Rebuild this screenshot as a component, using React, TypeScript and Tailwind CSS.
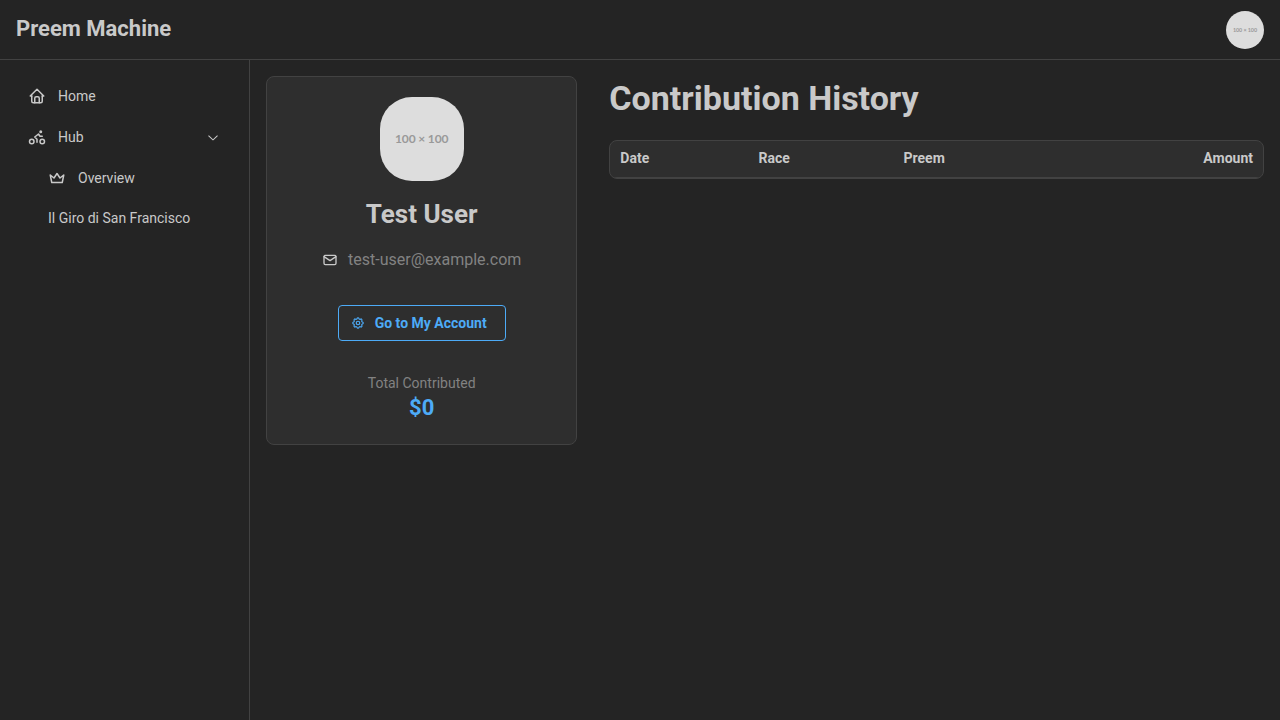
import { TbHome, TbBike, TbCrown, TbMail, TbSettings } from 'react-icons/tb';
import { RxChevronDown } from 'react-icons/rx';

export default function App() {
  return (
    <div className="flex h-screen flex-col bg-[#242424] font-['Roboto',sans-serif] text-[#c9c9c9]">
      <header className="flex h-[60px] shrink-0 items-center justify-between border-b border-[#424242] px-4">
        <div className="pb-px text-[22px] leading-[30px] font-bold">Preem Machine</div>
        <div className="flex size-[38px] items-center justify-center rounded-full bg-[#dddddd] pt-px font-['Lato',sans-serif] text-[5.4px] font-bold tracking-[-0.05px] text-[#999999]">
          100 × 100
        </div>
      </header>
      <div className="flex min-h-0 flex-1">
        <nav className="w-[250px] shrink-0 border-r border-[#424242] px-4 pt-[15px] text-sm">
          <a className="flex h-[41px] items-center gap-3 px-3">
            <TbHome size={18} />
            Home
          </a>
          <a className="flex h-[41px] items-center gap-3 px-3">
            <TbBike size={18} />
            Hub
            <RxChevronDown size={16} className="ml-auto" />
          </a>
          <a className="flex h-[41px] items-center gap-3 px-8">
            <TbCrown size={18} />
            Overview
          </a>
          <a className="flex h-[39px] items-center px-8">Il Giro di San Francisco</a>
        </nav>
        <main className="flex flex-1 items-start gap-8 p-4">
          <section className="flex h-[369px] w-[311.33px] shrink-0 flex-col items-center rounded-lg border border-[#424242] bg-[#2e2e2e] pt-5">
            <div className="flex size-[84px] items-center justify-center rounded-[32px] bg-[#dddddd] font-['Lato',sans-serif] text-[12px] font-bold tracking-[-0.15px] text-[#999999]">
              100 × 100
            </div>
            <h2 className="mt-4 text-[26px] leading-[35px] font-bold">Test User</h2>
            <div className="mt-4 flex items-center gap-2.5">
              <TbMail size={16} />
              <span className="text-base text-[#828282]">test-user@example.com</span>
            </div>
            <button className="mt-[33px] flex h-9 w-[168px] items-center gap-2.5 rounded border border-[#4dabf7] pl-3 text-sm font-bold text-[#4dabf7]">
              <TbSettings size={14} />
              Go to My Account
            </button>
            <div className="mt-8 text-sm text-[#828282]">Total Contributed</div>
            <div className="text-[22px] leading-[29px] font-bold text-[#4dabf7]">$0</div>
          </section>
          <section className="flex-1">
            <h1 className="text-[34px] leading-[44px] font-bold">Contribution History</h1>
            <div className="mt-5 overflow-hidden rounded-lg border border-[#424242] bg-[#2e2e2e]">
              <div className="grid h-[37px] grid-cols-[138.2px_145px_1fr_auto] items-center border-b border-[#424242] px-2.5 pb-0.5 text-sm font-bold">
                <span>Date</span>
                <span>Race</span>
                <span>Preem</span>
                <span>Amount</span>
              </div>
            </div>
          </section>
        </main>
      </div>
    </div>
  );
}
